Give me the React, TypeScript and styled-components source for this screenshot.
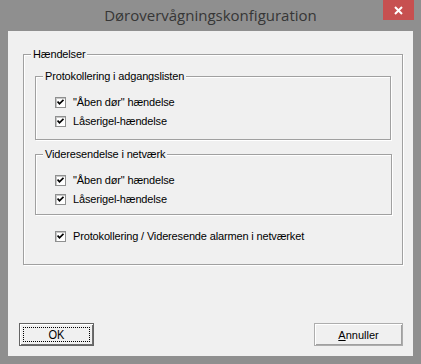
import React from 'react';
import styled, { createGlobalStyle } from 'styled-components';

const GlobalStyle = createGlobalStyle`
  html, body {
    margin: 0;
    padding: 0;
    background: #8f8f8f;
  }
`;

const Window = styled.div`
  position: relative;
  width: 421px;
  height: 364px;
  background: #8f8f8f;
  display: flex;
  flex-direction: column;
  font-family: 'Liberation Sans', Arial, sans-serif;
  font-size: 11px;
  letter-spacing: -0.15px;
  color: #000;
`;

const TitleBar = styled.div`
  height: 31px;
  display: flex;
  align-items: center;
  justify-content: center;
  font-family: 'Open Sans', 'DejaVu Sans', sans-serif;
  font-size: 15px;
  letter-spacing: 0;
  color: #363636;
  padding-bottom: 1px;
  box-sizing: border-box;
`;

const CloseButton = styled.div`
  position: absolute;
  top: 0;
  left: 383px;
  width: 31px;
  height: 20px;
  background: #c75050;
  display: flex;
  align-items: center;
  justify-content: center;
`;

const Client = styled.div`
  margin: 0 8px;
  height: 325px;
  background: #f0f0f0;
  display: flex;
  flex-direction: column;
  padding: 23px 0 0 15px;
  box-sizing: border-box;
`;

const Group = styled.div<{ w: number; h: number }>`
  position: relative;
  width: ${(p) => p.w}px;
  height: ${(p) => p.h}px;
  box-sizing: border-box;
  border: 1px solid #a0a0a0;
  box-shadow: inset 1px 1px 0 #fff, 1px 1px 0 #fff;
  display: flex;
  flex-direction: column;
`;

const GroupLabel = styled.span`
  position: absolute;
  top: -7px;
  left: 7px;
  padding: 0 2px;
  background: #f0f0f0;
  line-height: 13px;
  white-space: nowrap;
`;

const Inner = styled.div<{ top: number }>`
  margin: ${(p) => p.top}px 0 0 11px;
`;

const Rows = styled.div<{ top: number; left: number }>`
  display: flex;
  flex-direction: column;
  gap: 8px;
  padding: ${(p) => p.top}px 0 0 ${(p) => p.left}px;
`;

const Row = styled.label`
  display: flex;
  align-items: center;
  gap: 7px;
  height: 11px;
  line-height: 13px;
  white-space: nowrap;
`;

const Box = styled.span`
  width: 11px;
  height: 11px;
  box-sizing: border-box;
  background: #fff;
  border: 1px solid #8e8f8f;
  box-shadow: inset 1px 1px 0 #c8c8c8;
  display: flex;
  align-items: center;
  justify-content: center;
`;

const ButtonBar = styled.div`
  margin-top: auto;
  margin-bottom: 10px;
  margin-left: -4px;
  width: 384px;
  display: flex;
  justify-content: space-between;
`;

const Button = styled.button<{ primary?: boolean }>`
  width: ${(p) => (p.primary ? 75 : 89)}px;
  height: 23px;
  padding: 0;
  box-sizing: border-box;
  background: #f0f0f0;
  font-family: 'Liberation Sans', Arial, sans-serif;
  font-size: 11px;
  color: #000;
  border: 1px solid ${(p) => (p.primary ? '#646464' : '#adadad')};
  box-shadow: ${(p) =>
    p.primary
      ? 'inset 1px 1px 0 #fff, inset -1px -1px 0 #6e6e6e'
      : 'inset 1px 1px 0 #fff, inset -1px -1px 0 #a0a0a0'};
  display: flex;
  align-items: center;
  justify-content: center;
`;

const Focus = styled.span`
  width: 67px;
  height: 15px;
  box-sizing: border-box;
  border: 1px dotted #000;
  display: flex;
  align-items: center;
  justify-content: center;
`;

const OkText = styled.span`
  font-size: 13px;
  display: inline-block;
  transform: scaleX(0.85);
`;

const Check = () => (
  <svg width="7" height="7" viewBox="0 0 7 7">
    <path d="M0.5 2.5 L2.5 4.8 L6.5 0.8" stroke="#000" strokeWidth="1.8" fill="none" />
  </svg>
);

const CheckRow = ({ text }: { text: string }) => (
  <Row>
    <Box>
      <Check />
    </Box>
    {text}
  </Row>
);

export default function App() {
  return (
    <>
      <GlobalStyle />
      <Window>
        <TitleBar>Dørovervågningskonfiguration</TitleBar>
        <CloseButton>
          <svg width="9" height="9" viewBox="0 0 9 9">
            <path d="M1 1 L8 8 M8 1 L1 8" stroke="#fff" strokeWidth="2" />
          </svg>
        </CloseButton>
        <Client>
          <Group w={380} h={211}>
            <GroupLabel>Hændelser</GroupLabel>
            <Inner top={21}>
              <Group w={356} h={64}>
                <GroupLabel>Protokollering i adgangslisten</GroupLabel>
                <Rows top={20} left={19}>
                  <CheckRow text={'"Åben dør" hændelse'} />
                  <CheckRow text="Låserigel-hændelse" />
                </Rows>
              </Group>
            </Inner>
            <Inner top={14}>
              <Group w={357} h={61}>
                <GroupLabel>Videresendelse i netværk</GroupLabel>
                <Rows top={20} left={19}>
                  <CheckRow text={'"Åben dør" hændelse'} />
                  <CheckRow text="Låserigel-hændelse" />
                </Rows>
              </Group>
            </Inner>
            <Rows top={16} left={31}>
              <CheckRow text="Protokollering / Videresende alarmen i netværket" />
            </Rows>
          </Group>
          <ButtonBar>
            <Button primary>
              <Focus>
                <OkText>OK</OkText>
              </Focus>
            </Button>
            <Button>
              <span>
                <u>A</u>nnuller
              </span>
            </Button>
          </ButtonBar>
        </Client>
      </Window>
    </>
  );
}
